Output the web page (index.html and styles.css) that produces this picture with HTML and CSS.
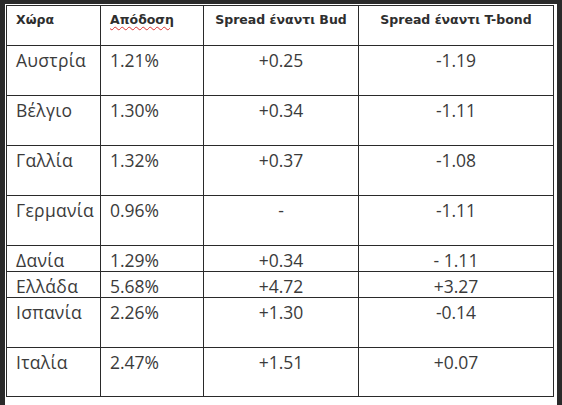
FILE: index.html
```html
<!DOCTYPE html>
<html lang="el">
<head>
    <meta charset="UTF-8">
    <title>Αποδόσεις ομολόγων</title>
    <link rel="stylesheet" href="styles.css">
</head>
<body>

<div class="frame">
    <div class="sheet">
        <table class="yields">
            <thead>
                <tr class="head">
                    <th class="col-country">Χώρα</th>
                    <th class="col-yield"><span class="typo">Απόδοση</span></th>
                    <th class="col-bud">Spread έναντι Bud</th>
                    <th class="col-tbond">Spread έναντι T-bond</th>
                </tr>
            </thead>
            <tbody>
                <tr class="tall"><td>Αυστρία</td><td>1.21%</td><td class="num">+0.25</td><td class="num">-1.19</td></tr>
                <tr class="tall"><td>Βέλγιο</td><td>1.30%</td><td class="num">+0.34</td><td class="num">-1.11</td></tr>
                <tr class="tall"><td>Γαλλία</td><td>1.32%</td><td class="num">+0.37</td><td class="num">-1.08</td></tr>
                <tr class="tall"><td>Γερμανία</td><td>0.96%</td><td class="num">-</td><td class="num">-1.11</td></tr>
                <tr class="short"><td>Δανία</td><td>1.29%</td><td class="num">+0.34</td><td class="num">- 1.11</td></tr>
                <tr class="short"><td>Ελλάδα</td><td>5.68%</td><td class="num">+4.72</td><td class="num">+3.27</td></tr>
                <tr class="tall"><td>Ισπανία</td><td>2.26%</td><td class="num">+1.30</td><td class="num">-0.14</td></tr>
                <tr class="tall last"><td>Ιταλία</td><td>2.47%</td><td class="num">+1.51</td><td class="num">+0.07</td></tr>
            </tbody>
        </table>
    </div>
</div>

</body>
</html>
```

FILE: styles.css
```css
body {
    margin: 0;
    padding: 0;
    background: #2a2a2a;
    font-family: "Open Sans", "Liberation Sans", sans-serif;
}
.frame {
    width: 562px;
    height: 405px;
    padding: 4px 5px 0 5px;
    box-sizing: border-box;
}
.sheet {
    background: white;
    height: 401px;
    padding: 1px 0 0 1px;
    box-sizing: border-box;
}
.yields {
    border-collapse: collapse;
    width: 548px;
    table-layout: fixed;
    color: #3b3b3b;
}
.yields th,
.yields td {
    border: 1px solid #2a2a2a;
    vertical-align: top;
    text-align: left;
    padding: 3px 0 0 9px;
    white-space: nowrap;
}
.yields th {
    font-family: "DejaVu Sans", Verdana, sans-serif;
    font-size: 12.5px;
    font-weight: bold;
    color: #2e2e2e;
    padding-top: 6px;
}
.col-country { width: 84px; }
.col-yield { width: 93px; }
.col-bud { width: 154px; }
.yields .col-bud,
.yields .col-tbond {
    text-align: center;
    padding-left: 0;
}
.typo {
    text-decoration: underline wavy #d33;
    text-decoration-thickness: 1px;
    text-underline-offset: 2px;
}
.yields td {
    font-size: 17.5px;
    line-height: 22px;
}
.yields td:first-child {
    padding-left: 9px;
    letter-spacing: 0.3px;
}
.yields td.num {
    text-align: center;
    padding-left: 0;
}
.head { height: 40px; }
.tall { height: 50px; }
.short { height: 25px; }
.last { height: 49px; }
```
